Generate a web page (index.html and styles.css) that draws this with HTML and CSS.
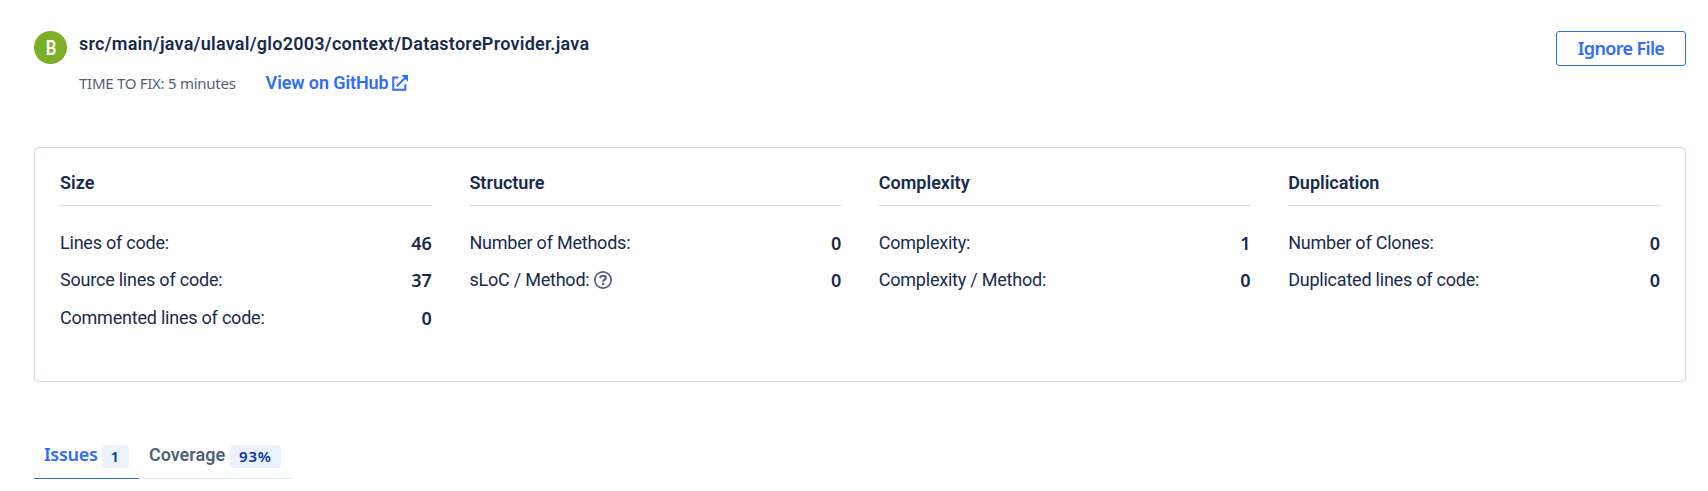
FILE: index.html
```html
<!DOCTYPE html>
<html lang="en">
<head>
<meta charset="utf-8">
<title>DatastoreProvider.java</title>
<link rel="stylesheet" href="styles.css">
</head>
<body>
<main class="page">
  <header class="file-header">
    <span class="grade"><span class="grade-letter">B</span></span>
    <div class="file-info">
      <h1 class="file-path">src/main/java/ulaval/glo2003/context/DatastoreProvider.java</h1>
      <div class="file-meta">
        <span class="fix-time">TIME TO FIX: 5 minutes</span>
        <a class="github-link"><span>View on GitHub</span><svg class="external-icon" viewBox="0 0 16 16" fill="none" stroke="currentColor" stroke-width="2"><path d="M6.5 2.5H1.2V14.8H13.3V9.2M4.7 11.3L13.4 2.6"/><path d="M9.3 0H16V6.7Z" fill="currentColor" stroke="none"/></svg></a>
      </div>
    </div>
    <button class="ignore-button">Ignore File</button>
  </header>

  <section class="metrics">
    <div class="metric-group">
      <h2 class="metric-title">Size</h2>
      <div class="metric"><span class="label">Lines of code:</span><span class="value">46</span></div>
      <div class="metric"><span class="label">Source lines of code:</span><span class="value">37</span></div>
      <div class="metric"><span class="label">Commented lines of code:</span><span class="value">0</span></div>
    </div>
    <div class="metric-group">
      <h2 class="metric-title">Structure</h2>
      <div class="metric"><span class="label">Number of Methods:</span><span class="value">0</span></div>
      <div class="metric"><span class="label">sLoC / Method:<svg class="help-icon" viewBox="0 0 18 18" fill="none" stroke="currentColor"><circle cx="9" cy="9" r="8.1" stroke-width="1.7"/><path d="M6.2 7.1C6.4 5.5 7.5 4.8 9 4.8C10.7 4.8 11.8 5.7 11.8 7C11.8 8.8 9.1 8.7 9.1 10.7" stroke-width="2.1"/><circle cx="9.1" cy="13" r="1.3" fill="currentColor" stroke="none"/></svg></span><span class="value">0</span></div>
    </div>
    <div class="metric-group">
      <h2 class="metric-title">Complexity</h2>
      <div class="metric"><span class="label">Complexity:</span><span class="value">1</span></div>
      <div class="metric"><span class="label">Complexity / Method:</span><span class="value">0</span></div>
    </div>
    <div class="metric-group">
      <h2 class="metric-title">Duplication</h2>
      <div class="metric"><span class="label">Number of Clones:</span><span class="value">0</span></div>
      <div class="metric"><span class="label">Duplicated lines of code:</span><span class="value">0</span></div>
    </div>
  </section>

  <nav class="tabs">
    <a class="tab tab-active"><span class="tab-issues">Issues</span><span class="badge">1</span></a>
    <a class="tab"><span>Coverage</span><span class="badge">93%</span></a>
  </nav>
</main>
</body>
</html>
```

FILE: styles.css
```css
* { box-sizing: border-box; }
body {
  margin: 0;
  background: #fff;
  color: #172b4d;
  font: 18px/24px Roboto, "Noto Sans", sans-serif;
}
.page { padding: 31px 22px 0 34px; }
.file-header { display: flex; align-items: flex-start; height: 116px; }
.grade {
  width: 33px;
  height: 33px;
  padding-left: 1px;
  border-radius: 50%;
  background: #7bb026;
  color: #fff;
  text-align: center;
  font-size: 21px;
  line-height: 34px;
  font-weight: 600;
}
.grade-letter { display: block; transform: scaleX(.8); }
.file-info { flex: 1; padding-left: 12px; }
.file-path { margin: 1px 0 0; font-size: 18px; line-height: 24px; font-weight: 600; letter-spacing: .25px; }
.file-meta { display: flex; align-items: baseline; gap: 30px; margin-top: 15px; }
.fix-time { font-family: "Noto Sans", sans-serif; font-size: 15px; color: #505f79; letter-spacing: -.27px; }
.github-link { display: flex; align-items: center; gap: 3px; color: #2f6bff; font-weight: 600; letter-spacing: -.1px; }
.external-icon { width: 16px; height: 16px; }
.ignore-button {
  width: 130px;
  height: 35px;
  padding: 0;
  border: 1px solid #2f6bff;
  border-radius: 3px;
  background: #fff;
  color: #2f6bff;
  font: 600 18px/31px "Noto Sans", sans-serif;
  letter-spacing: -.65px;
}
.metrics {
  display: grid;
  grid-template-columns: repeat(4, 1fr);
  column-gap: 37.5px;
  height: 235px;
  padding: 23px 25px;
  border: 1px solid #c9d7f0;
  border-radius: 4px;
}
.metric-title {
  height: 35px;
  margin: 0 0 25px;
  border-bottom: 1px solid #c9d7f0;
  font-size: 18px;
  line-height: 24px;
  font-weight: 600;
}
.metric { display: flex; justify-content: space-between; height: 37.4px; line-height: 24px; }
.label { display: flex; align-items: center; height: 24px; font-weight: 400; letter-spacing: -.22px; }
.help-icon { width: 18px; height: 18px; margin-left: 5px; color: #505f79; }
.value { font-family: "Noto Sans", sans-serif; font-weight: 600; }
.tabs { display: flex; margin-top: 59px; }
.tab {
  display: flex;
  align-items: flex-start;
  gap: 5px;
  height: 38px;
  padding: 0 10px;
  border-bottom: 1px solid #dfe8f7;
  color: #505f79;
  font-weight: 600;
}
.tab > span:first-child { padding-top: 2px; }
.tab-active { gap: 4px; border-color: #2f6bff; color: #2f6bff; }
.tab .tab-issues { margin-top: -1px; padding-top: 0; font-family: "Noto Sans", sans-serif; letter-spacing: -.3px; }
.badge {
  height: 23px;
  margin-top: 4px;
  padding: 0 9px;
  border-radius: 4px;
  background: #ebf2ff;
  color: #0b33a0;
  font: 600 15px/22px "Noto Sans", sans-serif;
  letter-spacing: .8px;
}
```
